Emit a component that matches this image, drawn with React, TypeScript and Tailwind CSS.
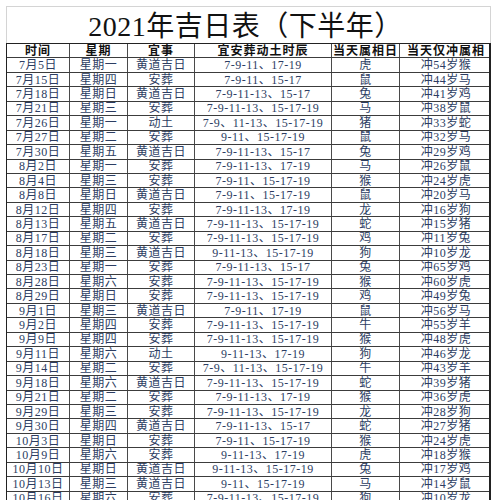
import React from "react";

type Row = [string, string, string, string, string, string];

const rows: Row[] = [
    ["7月5日", "星期一", "黄道吉日", "7-9-11、17-19", "虎", "冲54岁猴"],
    ["7月15日", "星期四", "安葬", "7-9-11、15-17", "鼠", "冲44岁马"],
    ["7月18日", "星期日", "黄道吉日", "7-9-11-13、15-17", "兔", "冲41岁鸡"],
    ["7月21日", "星期三", "安葬", "7-9-11-13、15-17-19", "马", "冲38岁鼠"],
    ["7月26日", "星期一", "动土", "7-9、11-13、15-17-19", "猪", "冲33岁蛇"],
    ["7月27日", "星期二", "安葬", "9-11、15-17-19", "鼠", "冲32岁马"],
    ["7月30日", "星期五", "黄道吉日", "7-9-11-13、15-17", "兔", "冲29岁鸡"],
    ["8月2日", "星期一", "安葬", "7-9-11-13、17-19", "马", "冲26岁鼠"],
    ["8月4日", "星期三", "安葬", "7-9-11、15-17-19", "猴", "冲24岁虎"],
    ["8月8日", "星期日", "黄道吉日", "7-9-11、15-17-19", "鼠", "冲20岁马"],
    ["8月12日", "星期四", "安葬", "7-9-11-13、17-19", "龙", "冲16岁狗"],
    ["8月13日", "星期五", "黄道吉日", "7-9-11-13、15-17-19", "蛇", "冲15岁猪"],
    ["8月17日", "星期二", "安葬", "7-9-11-13、15-17-19", "鸡", "冲11岁兔"],
    ["8月18日", "星期三", "黄道吉日", "9-11-13、15-17-19", "狗", "冲10岁龙"],
    ["8月23日", "星期一", "安葬", "7-9-11-13、15-17", "兔", "冲65岁鸡"],
    ["8月28日", "星期六", "安葬", "7-9-11-13、15-17-19", "猴", "冲60岁虎"],
    ["8月29日", "星期日", "安葬", "7-9-11-13、15-17-19", "鸡", "冲49岁兔"],
    ["9月1日", "星期三", "黄道吉日", "7-9-11、17-19", "鼠", "冲56岁马"],
    ["9月2日", "星期四", "安葬", "7-9-11-13、15-17-19", "牛", "冲55岁羊"],
    ["9月9日", "星期四", "安葬", "7-9-11-13、15-17-19", "猴", "冲48岁虎"],
    ["9月11日", "星期六", "动土", "9-11-13、17-19", "狗", "冲46岁龙"],
    ["9月14日", "星期二", "安葬", "7-9、11-13、15-17-19", "牛", "冲43岁羊"],
    ["9月18日", "星期六", "黄道吉日", "7-9-11-13、15-17-19", "蛇", "冲39岁猪"],
    ["9月21日", "星期二", "安葬", "7-9-11-13、17-19", "猴", "冲36岁虎"],
    ["9月29日", "星期三", "安葬", "7-9-11-13、15-17-19", "龙", "冲28岁狗"],
    ["9月30日", "星期四", "黄道吉日", "7-9-11-13、15-17", "蛇", "冲27岁猪"],
    ["10月3日", "星期日", "安葬", "7-9-11、15-17-19", "猴", "冲24岁虎"],
    ["10月9日", "星期六", "安葬", "9-11-13、17-19", "虎", "冲18岁猴"],
    ["10月10日", "星期日", "黄道吉日", "9-11-13、15-17-19", "兔", "冲17岁鸡"],
    ["10月13日", "星期三", "黄道吉日", "9-11、15-17-19", "马", "冲14岁鼠"],
    ["10月16日", "星期六", "安葬", "7-9-11-13、15-17-19", "狗", "冲10岁龙"],
];

const headers = ["时间", "星期", "宜事", "宜安葬动土时辰", "当天属相日", "当天仅冲属相"];

const font = { fontFamily: '"Liberation Serif", "Noto Sans CJK SC", serif' };

function TableRow({ cells, head }: { cells: string[]; head?: boolean }) {
    return (
        <div className="grid grid-cols-[63px_58px_67px_137px_68px_92px] h-[14.45px] border-b border-[#3c3c3c]">
            {cells.map((c, i) => (
                <div
                    key={i}
                    className={`flex items-center justify-center overflow-hidden whitespace-nowrap text-[12px] leading-[14px] ${
                        i < 5 ? "border-r border-[#4a4a4a]" : ""
                    } ${head ? "text-[#111] font-bold tracking-[1px]" : "text-[#2c3d62] tracking-[0.5px]"}`}
                >
                    {c}
                </div>
            ))}
        </div>
    );
}

export default function App() {
    return (
        <div className="w-[498px] h-[500px] overflow-hidden bg-white pl-[6px] pt-[6px]" style={font}>
            <div className="w-[485px] h-[37px] border-t border-l border-r border-[#d4d4d4] flex items-center justify-center pt-[3px]">
                <span className="text-[28px] leading-none text-[#111] tracking-[0.5px] pr-[6px]">2021年吉日表（下半年）</span>
            </div>
            <div className="w-[485px] border-l border-r-2 border-t border-[#222]">
                <TableRow cells={headers} head />
                {rows.map((r, i) => (
                    <TableRow key={i} cells={r} />
                ))}
            </div>
        </div>
    );
}
